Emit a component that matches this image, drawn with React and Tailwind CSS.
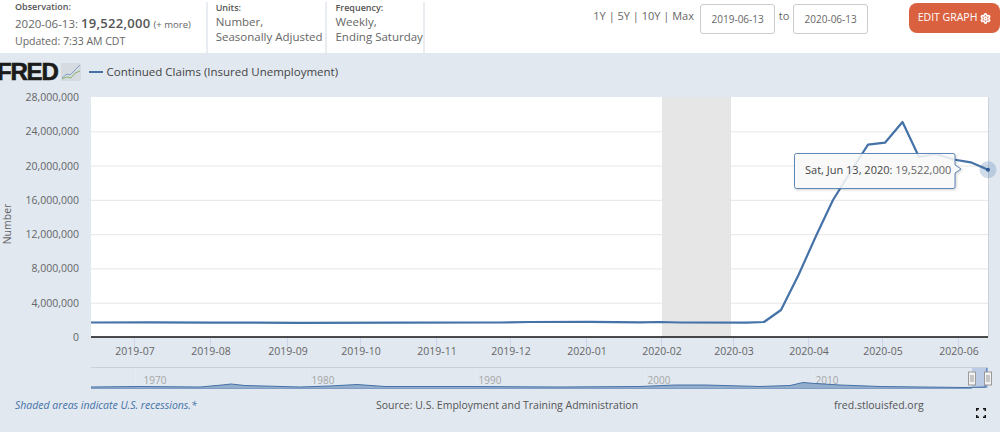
import { Settings } from 'lucide-react'

const PLOT = { left: 91, right: 988, top: 9, bottom: 249 } // svg starts at y=88

const yLabels = ['0', '4,000,000', '8,000,000', '12,000,000', '16,000,000', '20,000,000', '24,000,000', '28,000,000']

const months = [
  ['2019-07', 134], ['2019-08', 210], ['2019-09', 287], ['2019-10', 360],
  ['2019-11', 436], ['2019-12', 510], ['2020-01', 586], ['2020-02', 661],
  ['2020-03', 733], ['2020-04', 808], ['2020-05', 882], ['2020-06', 958],
]

const decades = [['1970', 155, 135], ['1980', 323, 309], ['1990', 490, 476], ['2000', 659, 645], ['2010', 827, 813]]

// y values measured on page, minus svg offset below
const linePoints = [
  [91, 322.5], [150, 322.3], [210, 322.6], [300, 322.8], [400, 322.6], [500, 322.5], [530, 322], [590, 321.8],
  [640, 322.4], [660, 322], [680, 322.5], [747, 322.7], [764, 322], [781, 310], [798.5, 275], [816, 236],
  [833, 200], [850.5, 172], [868, 144.7], [885, 142.7], [902.5, 122], [919, 157], [936, 154], [953.5, 159.5],
  [970.75, 162.3], [988, 169.7],
].map(([x, y]) => `${x},${y - 88}`).join(' ')

const navLine = [
  [91, 387], [140, 386.5], [200, 387], [222, 385], [231, 384], [245, 385.5], [300, 387], [330, 386], [357, 384.5],
  [385, 386.5], [470, 386.5], [560, 387], [640, 386.5], [675, 385], [705, 385], [760, 386.5], [790, 385.5],
  [803, 382.5], [815, 383.5], [840, 385], [880, 386.5], [965, 387.5], [985, 387], [987, 368],
].map(([x, y]) => `${x},${y - 88}`).join(' ')

function Chart() {
  const ty = (i) => PLOT.bottom - (i * (PLOT.bottom - PLOT.top)) / 7
  return (
    <svg width="1000" height="307" className="block" style={{ fontFamily: '"Open Sans", sans-serif' }}>
      <rect x={PLOT.left} y={PLOT.top} width={PLOT.right - PLOT.left} height={PLOT.bottom - PLOT.top} fill="#fff" />
      <rect x="662" y={PLOT.top} width="69" height={PLOT.bottom - PLOT.top} fill="#e6e6e6" />
      {yLabels.map((label, i) => (
        <g key={label}>
          {i > 0 && i < 7 && (
            <line x1={PLOT.left} x2={PLOT.right} y1={ty(i) + 0.5} y2={ty(i) + 0.5} stroke="#e6e6e6" />
          )}
          <text x="79" y={ty(i) + 4} textAnchor="end" fontSize="10.5" fill="#666">{label}</text>
        </g>
      ))}
      <line x1={PLOT.right + 0.5} x2={PLOT.right + 0.5} y1={PLOT.top} y2={PLOT.bottom} stroke="#ccd2da" />
      <line x1={PLOT.left} x2={PLOT.right} y1={PLOT.bottom} y2={PLOT.bottom} stroke="#111" strokeWidth="1.5" />
      <text transform="translate(11 136) rotate(-90)" textAnchor="middle" fontSize="10.5" fill="#666">Number</text>

      {months.map(([label, x]) => (
        <g key={label}>
          <line x1={x + 0.5} x2={x + 0.5} y1={PLOT.bottom + 1} y2={PLOT.bottom + 10} stroke="#ccd6eb" />
          <text x={x + 1} y={PLOT.bottom + 18} textAnchor="middle" fontSize="10.5" fill="#666">{label}</text>
        </g>
      ))}

      <polyline points={linePoints} fill="none" stroke="#4572a7" strokeWidth="2.2" strokeLinejoin="round" />
      <circle cx="988" cy="81.7" r="8.5" fill="#4572a7" fillOpacity="0.25" />
      <circle cx="988" cy="81.7" r="2" fill="#2f5a94" />

      {/* navigator */}
      <line x1={PLOT.left} x2={PLOT.right} y1="279.5" y2="279.5" stroke="#ccd0d6" />
      {decades.map(([label, x, gx]) => (
        <g key={label}>
          <line x1={gx + 0.5} x2={gx + 0.5} y1="280" y2="301" stroke="#e6ebf1" />
          <text x={x} y="296" textAnchor="middle" fontSize="10" fill="#a6a6a6">{label}</text>
        </g>
      ))}
      <rect x="972" y="280" width="16" height="20" fill="#b3c4e4" fillOpacity="0.8" />
      <polygon points={`${navLine} 987,300 91,300`} fill="#4572a7" fillOpacity="0.5" />
      <polyline points={navLine} fill="none" stroke="#4572a7" strokeWidth="1" />
      <line x1={PLOT.left} x2="972" y1="300.5" y2="300.5" stroke="#7f9cc4" />
      {[972, 988].map((x) => (
        <g key={x}>
          <rect x={x - 3.5} y="284" width="7" height="13" fill="#f2f2f2" stroke="#999" />
          <line x1={x - 1} x2={x - 1} y1="287" y2="294" stroke="#999" />
          <line x1={x + 1} x2={x + 1} y1="287" y2="294" stroke="#999" />
        </g>
      ))}

      {/* tooltip */}
      <path
        d="M796.5 65.5H953a2 2 0 0 1 2 2V77l6 4-6 4v13.5a2 2 0 0 1-2 2H796.5a2 2 0 0 1-2-2v-31a2 2 0 0 1 2-2z"
        fill="#fff"
        fillOpacity="0.85"
        stroke="#5f86b8"
        style={{ filter: 'drop-shadow(1px 1px 1px rgba(0,0,0,0.2))' }}
      />
      <text x="805" y="86" fontSize="11">
        <tspan fill="#444">Sat, Jun 13, 2020: </tspan>
        <tspan fill="#666">19,522,000</tspan>
      </text>
    </svg>
  )
}

export default function App() {
  return (
    <div className="w-[1000px] h-[433px] overflow-hidden bg-white text-[#666] font-['Open_Sans',sans-serif]">
      <div className="flex h-[53px] bg-white">
        <div className="w-[206px] pl-[15px] pt-[1px]">
          <div className="text-[9px] leading-[12px] font-semibold text-[#555]">Observation:</div>
          <div className="text-[11.5px] leading-[16px] mt-[2px] whitespace-nowrap">
            2020-06-13: <span className="text-[13px] font-semibold text-[#555] tracking-[0.3px]">19,522,000</span>{' '}
            <span className="text-[9.5px]">(+ more)</span>
          </div>
          <div className="text-[10.5px] leading-[14px] mt-[1px]">Updated: 7:33 AM CDT</div>
        </div>
        <div className="w-[120px] mt-[2px] border-l-2 border-[#e9edf2] pl-[8px]">
          <div className="text-[9px] leading-[11px] font-semibold text-[#555]">Units:</div>
          <div className="text-[11.5px] leading-[15px] mt-[1px]">Number,</div>
          <div className="text-[11.5px] leading-[15px] whitespace-nowrap">Seasonally Adjusted</div>
        </div>
        <div className="w-[100px] mt-[2px] border-l-2 border-r-2 border-[#e9edf2] pl-[8px]">
          <div className="text-[9px] leading-[11px] font-semibold text-[#555]">Frequency:</div>
          <div className="text-[11.5px] leading-[15px] mt-[1px]">Weekly,</div>
          <div className="text-[11.5px] leading-[15px] whitespace-nowrap">Ending Saturday</div>
        </div>
        <div className="ml-[168px] pt-[8px] text-[11px] leading-[15px] whitespace-nowrap w-[107px]">1Y | 5Y | 10Y | Max</div>
        <div className="flex items-start pt-[4px]">
          <div className="flex items-center justify-center w-[75px] h-[30px] rounded-[3px] border border-[#ccc] text-[10px]">2019-06-13</div>
          <span className="w-[18px] mt-[3px] text-center text-[11px] leading-[18px]">to</span>
          <div className="flex items-center justify-center w-[75px] h-[30px] rounded-[3px] border border-[#ccc] text-[10px]">2020-06-13</div>
        </div>
        <div className="ml-[41px] mt-[3px] flex items-center justify-center gap-[3px] w-[91px] h-[30px] rounded-[8px] bg-[#d9613f] text-white text-[10.5px]">
          <span className="whitespace-nowrap">EDIT GRAPH</span>
          <Settings size={11} strokeWidth={3.5} />
        </div>
      </div>

      <div className="h-[379px] bg-[#e1e8f0]">
        <div className="flex items-center h-[35px] pt-[2px] pl-[0px]">
          <span className="ml-[-3px] font-['Liberation_Sans',sans-serif] font-bold text-[24px] leading-[24px] tracking-[-1.2px] text-[#1b1b1b] [-webkit-text-stroke:0.6px_#1b1b1b]">FRED</span>
          <svg width="20" height="18" viewBox="0 0 20 18" className="ml-[3px]">
            <rect width="20" height="18" rx="1" fill="#d5dbe1" />
            <polyline points="1,15 6,11 9,12 14,7 19,2" fill="none" stroke="#7f9cc4" strokeWidth="1" />
            <polyline points="1,16 6,14 10,15 14,10 19,8" fill="none" stroke="#8ab56a" strokeWidth="1" />
          </svg>
          <span className="ml-[8px] w-[14px] h-[2px] bg-[#4572a7]" />
          <span className="ml-[4px] text-[11.5px] text-[#444] whitespace-nowrap">Continued Claims (Insured Unemployment)</span>
        </div>
        <Chart />
        <div className="relative flex items-center h-[22px] text-[10.5px]">
          <span className="ml-[15px] w-[361px] italic text-[#4572a7] whitespace-nowrap">Shaded areas indicate U.S. recessions.*</span>
          <span className="w-[458px] whitespace-nowrap text-[#555]">Source: U.S. Employment and Training Administration</span>
          <span className="whitespace-nowrap text-[#555]">fred.stlouisfed.org</span>
          <svg width="10" height="10" viewBox="0 0 10 10" className="absolute left-[976px] top-[13px]" fill="none" stroke="#111" strokeWidth="1.5">
            <path d="M0.75 3V0.75H3M7 0.75H9.25V3M9.25 7V9.25H7M3 9.25H0.75V7" />
          </svg>
        </div>
      </div>
    </div>
  )
}
